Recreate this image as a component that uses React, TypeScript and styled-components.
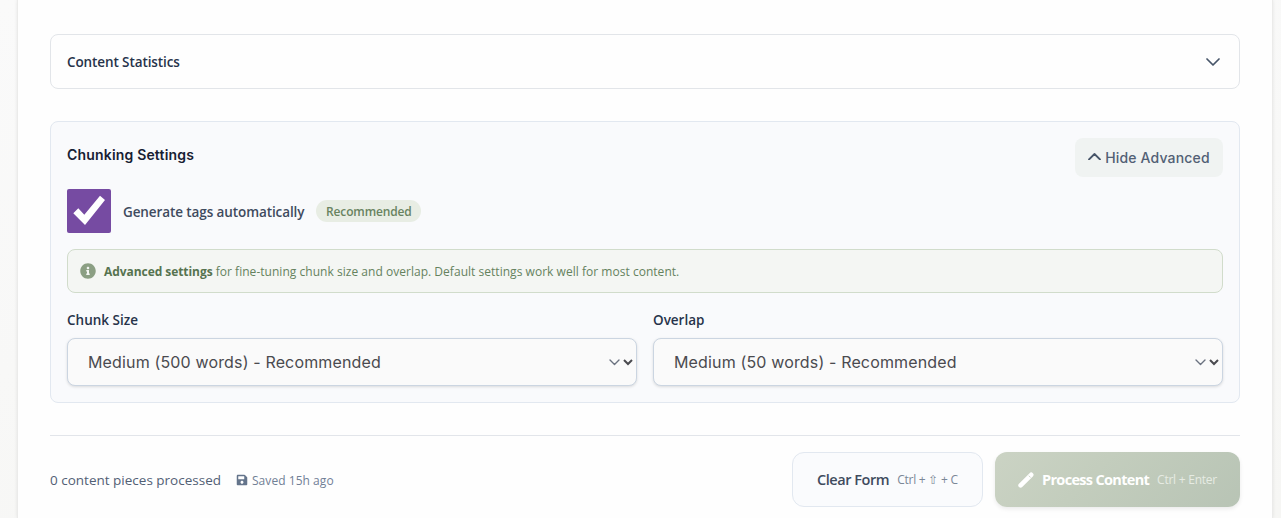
import React from "react";
import styled, { createGlobalStyle } from "styled-components";
import { FaInfoCircle, FaSave } from "react-icons/fa";

const ui = `"Open Sans", "Noto Sans", sans-serif`;
const inter = `Inter, sans-serif`;

const Global = createGlobalStyle`
  * { box-sizing: border-box; }
  body { margin: 0; height: 518px; overflow: hidden; background: linear-gradient(170deg, #fafafa, #f6f6f4); }
`;

const Page = styled.div`
  height: 518px;
  padding: 0 9px 0 18px;
  display: flex;
`;

const Card = styled.main`
  flex: 1;
  height: 518px;
  padding: 34px 32px 0;
  background: #fefefe;
  box-shadow: 0 0 0 1px #ebebea, 0 0 4px rgba(0, 0, 0, 0.14);
`;

const Text = styled.span<{ $size: number; $color: string; $weight?: number; $track?: number; $family?: string }>`
  font-family: ${(p) => p.$family ?? ui};
  font-size: ${(p) => p.$size}px;
  font-weight: ${(p) => p.$weight ?? 400};
  letter-spacing: ${(p) => p.$track ?? 0}px;
  line-height: 20px;
  color: ${(p) => p.$color};
  white-space: nowrap;
`;

const Statistics = styled.section`
  height: 55px;
  padding: 1px 19px 0 16px;
  display: flex;
  align-items: center;
  justify-content: space-between;
  border: 1px solid #e2e5e9;
  border-radius: 8px;
`;

const Settings = styled.section`
  height: 282px;
  margin-top: 32px;
  padding: 16px;
  background: #f9fafc;
  border: 1px solid #e2e8f0;
  border-radius: 8px;
`;

const SettingsHead = styled.div`
  display: flex;
  justify-content: space-between;
  height: 39px;
`;

const Title = styled.div`
  display: flex;
  height: 27px;
  padding-top: 7px;
`;

const HideButton = styled.button`
  width: 148px;
  height: 39px;
  padding: 0;
  display: flex;
  align-items: center;
  justify-content: center;
  gap: 4px;
  border: 0;
  border-radius: 8px;
  background: #f0f3f2;
  svg { margin-bottom: 2px; }
`;

const TagRow = styled.label`
  display: flex;
  align-items: center;
  height: 44px;
  margin-top: 12px;
  > span:nth-child(2) { padding-top: 2px; }
`;

const CheckBox = styled.span`
  width: 44px;
  height: 44px;
  margin-right: 12px;
  border-radius: 2px;
  background: #764ba2;
  svg { display: block; }
`;

const Badge = styled.span`
  width: 105px;
  height: 22px;
  margin-left: 12px;
  padding-top: 1px;
  display: flex;
  align-items: center;
  justify-content: center;
  border-radius: 11px;
  background: #e8ede4;
`;

const Notice = styled.div`
  display: flex;
  align-items: center;
  height: 44px;
  margin-top: 16px;
  padding-left: 12px;
  border: 1px solid #d1dccb;
  border-radius: 8px;
  background: #f4f6f3;
  svg { margin-right: 8px; }
  > span { padding-top: 2px; }
`;

const Fields = styled.div`
  display: grid;
  grid-template-columns: 1fr 1fr;
  gap: 16px;
  margin-top: 17px;
`;

const Field = styled.div`
  display: flex;
  flex-direction: column;
  gap: 8px;
`;

const SelectBox = styled.div`
  position: relative;
  svg { position: absolute; right: 17px; top: 21px; pointer-events: none; }
`;

const Select = styled.select`
  display: block;
  width: 100%;
  height: 48px;
  padding: 0 40px 0 16px;
  border: 1px solid #cbd5e1;
  border-radius: 8px;
  background: #fafafa;
  color: #4a4a4f;
  font: 400 16px ${inter};
  letter-spacing: 0.15px;
  box-shadow: 0 1px 3px rgba(0, 0, 0, 0.13);
`;

const Footer = styled.footer`
  display: flex;
  align-items: center;
  margin-top: 32px;
  padding-top: 16px;
  border-top: 1px solid #e2e5ea;
`;

const Status = styled.div`
  display: flex;
  align-items: center;
  padding-top: 1px;
`;

const Saved = styled.div`
  display: flex;
  align-items: center;
  gap: 4px;
  margin-left: 15px;
  padding-top: 1px;
  svg { margin-bottom: 2px; }
`;

const Actions = styled.div`
  display: flex;
  gap: 12px;
  margin-left: auto;
`;

const Action = styled.button<{ $primary?: boolean }>`
  display: flex;
  align-items: center;
  gap: 8px;
  width: ${(p) => (p.$primary ? 245 : 191)}px;
  height: 55px;
  padding: 0 0 0 ${(p) => (p.$primary ? 23 : 24)}px;
  border: ${(p) => (p.$primary ? "0" : "1px solid #e2e8f0")};
  border-radius: 12px;
  background: ${(p) => (p.$primary ? "linear-gradient(135deg, #cbd3c4, #c3cdbd 40%, #b8c4b5)" : "#fafbfd")};
  box-shadow: ${(p) => (p.$primary ? "0 2px 4px rgba(0, 0, 0, 0.08)" : "none")};
`;

const Chevron = ({ w, h, color, stroke, up }: { w: number; h: number; color: string; stroke: number; up?: boolean }) => (
  <svg width={w} height={h} viewBox={`0 0 ${w} ${h}`} fill="none" stroke={color} strokeWidth={stroke} strokeLinecap="round" strokeLinejoin="round">
    <path d={up ? `M1 ${h - 1}L${w / 2} 1L${w - 1} ${h - 1}` : `M1 1L${w / 2} ${h - 1}L${w - 1} 1`} />
  </svg>
);

const Choice = ({ label, value }: { label: string; value: string }) => (
  <Field>
    <Text $size={13.5} $weight={600} $color="#27334a">{label}</Text>
    <SelectBox>
      <Select defaultValue={value}><option>{value}</option></Select>
      <Chevron w={11} h={6.5} color="#6b7280" stroke={1.4} />
    </SelectBox>
  </Field>
);

export default function App() {
  return (
    <Page>
      <Global />
      <Card>
        <Statistics>
          <Text $size={13.5} $weight={600} $track={-0.1} $color="#27334a">Content Statistics</Text>
          <Chevron w={14} h={8} color="#475569" stroke={1.7} />
        </Statistics>
        <Settings>
          <SettingsHead>
            <Title><Text $size={14} $weight={600} $track={0.18} $color="#172033" $family={inter}>Chunking Settings</Text></Title>
            <HideButton>
              <Chevron w={13} h={7.5} color="#475569" stroke={1.8} up />
              <Text $size={14} $weight={500} $track={0.17} $color="#526075" $family={inter}>Hide Advanced</Text>
            </HideButton>
          </SettingsHead>
          <TagRow>
            <CheckBox>
              <svg width="44" height="44"><path d="M33 6.7L38 11L18 36L6.3 24.3L11.3 19.3L17.3 25.7Z" fill="#fff" /></svg>
            </CheckBox>
            <Text $size={13.5} $weight={600} $track={-0.1} $color="#3f4b5e">Generate tags automatically</Text>
            <Badge><Text $size={12} $weight={600} $track={-0.15} $color="#688360">Recommended</Text></Badge>
          </TagRow>
          <Notice>
            <FaInfoCircle size={16} color="#8b9f83" />
            <Text $size={12} $track={0.03} $color="#65825e"><Text as="b" $size={12} $weight={700} $track={-0.06} $color="#56734f">Advanced settings</Text> for fine-tuning chunk size and overlap. Default settings work well for most content.</Text>
          </Notice>
          <Fields>
            <Choice label="Chunk Size" value="Medium (500 words) - Recommended" />
            <Choice label="Overlap" value="Medium (50 words) - Recommended" />
          </Fields>
        </Settings>
        <Footer>
          <Status>
            <Text $size={13.5} $color="#526075">0 content pieces processed</Text>
            <Saved>
              <FaSave size={12} color="#64748b" />
              <Text $size={12} $track={0.05} $color="#718096">Saved 15h ago</Text>
            </Saved>
          </Status>
          <Actions>
            <Action>
              <Text $size={14.5} $weight={600} $track={-0.45} $color="#3f4b5e">Clear Form</Text>
              <Text $size={12} $track={-0.25} $color="#7b8797">Ctrl + ⇧ + C</Text>
            </Action>
            <Action $primary>
              <svg width="16" height="16" viewBox="0 0 16 16"><path d="M2.6 13.4L13.2 2.8" stroke="#fff" strokeWidth="4.6" strokeLinecap="round" /><path d="M10.8 3.7L12.6 5.5" stroke="#c3cdbd" strokeWidth=".8" /></svg>
              <Text $size={14.5} $weight={700} $track={-0.68} $color="#fff">Process Content</Text>
              <Text $size={12} $track={-0.25} $color="#e6ebe3">Ctrl + Enter</Text>
            </Action>
          </Actions>
        </Footer>
      </Card>
    </Page>
  );
}
